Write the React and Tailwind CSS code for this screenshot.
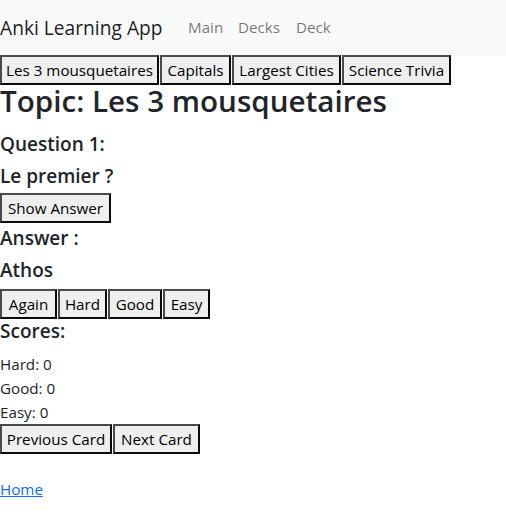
import React from "react";

const font = { fontFamily: '"Open Sans", "Noto Sans", sans-serif' };

function Btn({ w, children }) {
  return (
    <button
      className={`h-[30px] ${w} shrink-0 bg-[#efefef] text-black text-[15.2px] leading-[24px] border-2 border-t-[#4a4a4a] border-l-[#4a4a4a] border-b-[#0a0a0a] border-r-[#0a0a0a] flex items-center justify-center whitespace-nowrap px-0`}
    >
      {children}
    </button>
  );
}

function H5({ className = "", children }) {
  return <h5 className={`text-[19px] leading-[24px] font-semibold ${className}`}>{children}</h5>;
}

export default function App() {
  return (
    <div className="w-[506px] min-h-[531px] bg-white text-[#212529] flex flex-col items-start" style={font}>
      <nav className="h-[55px] w-full bg-[#f8f9fa] flex items-center">
        <span className="w-[180px] text-[19.2px] leading-[30px] text-black/90 whitespace-nowrap">Anki Learning App</span>
        <a className="w-[50px] px-2 text-[15.2px] text-black/55 whitespace-nowrap">Main</a>
        <a className="w-[58px] px-2 text-[15.2px] text-black/55 whitespace-nowrap">Decks</a>
        <a className="w-[51px] px-2 text-[15.2px] text-black/55 whitespace-nowrap">Deck</a>
      </nav>

      <div className="flex gap-px">
        <Btn w="w-[159px]">Les 3 mousquetaires</Btn>
        <Btn w="w-[71px]">Capitals</Btn>
        <Btn w="w-[109px]">Largest Cities</Btn>
        <Btn w="w-[109px]">Science Trivia</Btn>
      </div>

      <h1 className="text-[29.6px] leading-[32px] font-semibold mb-[15px] whitespace-nowrap">Topic: Les 3 mousquetaires</h1>
      <H5 className="mb-2">Question 1:</H5>
      <H5 className="mb-[5px]">Le premier ?</H5>

      <Btn w="w-[111px]">Show Answer</Btn>

      <H5 className="mt-[3px] mb-2">Answer :</H5>
      <H5 className="mb-[7px]">Athos</H5>

      <div className="flex gap-px">
        <Btn w="w-[57px]">Again</Btn>
        <Btn w="w-[49px]">Hard</Btn>
        <Btn w="w-[54px]">Good</Btn>
        <Btn w="w-[47px]">Easy</Btn>
      </div>

      <H5 className="mb-[9px]">Scores:</H5>
      <div className="text-[15.2px] leading-[24px]">
        <p>Hard: 0</p>
        <p>Good: 0</p>
        <p>Easy: 0</p>
      </div>

      <div className="flex gap-px">
        <Btn w="w-[112px]">Previous Card</Btn>
        <Btn w="w-[87px]">Next Card</Btn>
      </div>

      <a href="#" className="mt-[23px] text-[15.2px] leading-[24px] text-[#0d6efd] underline">Home</a>
    </div>
  );
}
